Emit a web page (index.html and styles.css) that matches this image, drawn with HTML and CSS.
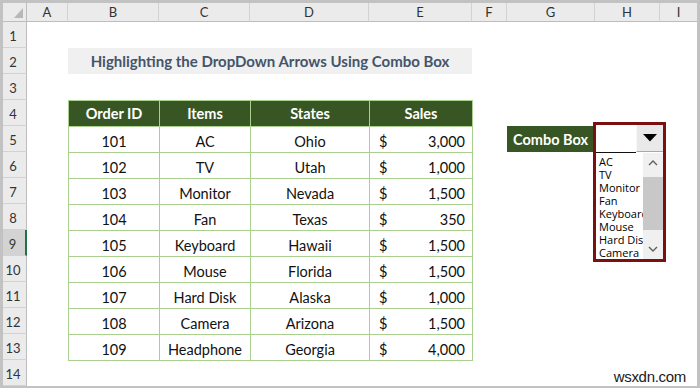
FILE: index.html
```html
<!DOCTYPE html>
<html>
<head>
<meta charset="utf-8">
<link rel="stylesheet" href="styles.css">
</head>
<body>
<div class="sheet">
  <div class="rowhead">
    <div class="rh">1</div>
    <div class="rh">2</div>
    <div class="rh">3</div>
    <div class="rh">4</div>
    <div class="rh">5</div>
    <div class="rh">6</div>
    <div class="rh">7</div>
    <div class="rh">8</div>
    <div class="rh active">9</div>
    <div class="rh">10</div>
    <div class="rh">11</div>
    <div class="rh">12</div>
    <div class="rh">13</div>
    <div class="rh">14</div>
  </div>

  <div class="title">Highlighting the DropDown Arrows Using Combo Box</div>

  <table class="data">
    <colgroup>
      <col class="c-id"><col class="c-item"><col class="c-state"><col class="c-sales">
    </colgroup>
    <thead>
      <tr><th>Order ID</th><th>Items</th><th>States</th><th>Sales</th></tr>
    </thead>
    <tbody>
      <tr><td>101</td><td>AC</td><td>Ohio</td><td class="money"><span>$</span><span>3,000</span></td></tr>
      <tr><td>102</td><td>TV</td><td>Utah</td><td class="money"><span>$</span><span>1,000</span></td></tr>
      <tr><td>103</td><td>Monitor</td><td>Nevada</td><td class="money"><span>$</span><span>1,500</span></td></tr>
      <tr><td>104</td><td>Fan</td><td>Texas</td><td class="money"><span>$</span><span>350</span></td></tr>
      <tr><td>105</td><td>Keyboard</td><td>Hawaii</td><td class="money"><span>$</span><span>1,500</span></td></tr>
      <tr><td>106</td><td>Mouse</td><td>Florida</td><td class="money"><span>$</span><span>1,500</span></td></tr>
      <tr><td>107</td><td>Hard Disk</td><td>Alaska</td><td class="money"><span>$</span><span>1,000</span></td></tr>
      <tr><td>108</td><td>Camera</td><td>Arizona</td><td class="money"><span>$</span><span>1,500</span></td></tr>
      <tr><td>109</td><td>Headphone</td><td>Georgia</td><td class="money"><span>$</span><span>4,000</span></td></tr>
    </tbody>
  </table>

  <div class="combo-label">Combo Box</div>

  <div class="corner"><svg width="9" height="10" viewBox="0 0 9 10"><polygon points="9,0 9,10 0,10" fill="#b8b8b8"/></svg></div>
  <div class="ch">A</div>
  <div class="ch">B</div>
  <div class="ch">C</div>
  <div class="ch">D</div>
  <div class="ch">E</div>
  <div class="ch">F</div>
  <div class="ch">G</div>
  <div class="ch">H</div>
  <div class="ch last">I</div>

  <div class="combo">
    <div class="combo-top">
      <div class="combo-field"></div>
      <div class="combo-btn"><svg width="14" height="8" viewBox="0 0 14 8"><polygon points="0,0 14,0 7,7.5" fill="#000"/></svg></div>
    </div>
    <div class="combo-list">
      <ul class="combo-items">
        <li>AC</li>
        <li>TV</li>
        <li>Monitor</li>
        <li>Fan</li>
        <li>Keyboard</li>
        <li>Mouse</li>
        <li>Hard Disk</li>
        <li>Camera</li>
      </ul>
      <div class="scroll">
        <div class="sbtn"><svg width="10" height="6" viewBox="0 0 10 6"><polyline points="1,5 5,1 9,5" fill="none" stroke="#606060" stroke-width="1.4"/></svg></div>
        <div class="track"><div class="thumb"></div></div>
        <div class="sbtn"><svg width="10" height="6" viewBox="0 0 10 6"><polyline points="1,1 5,5 9,1" fill="none" stroke="#606060" stroke-width="1.4"/></svg></div>
      </div>
    </div>
  </div>

  <div class="watermark">wsxdn.com</div>
</div>
</body>
</html>
```

FILE: styles.css
```css
* { box-sizing: border-box; }
html, body { margin: 0; padding: 0; }
body {
  width: 700px;
  height: 388px;
  overflow: hidden;
  background: #fff;
  font-family: "Lato", "Carlito", sans-serif;
}
.sheet {
  position: relative;
  width: 700px;
  height: 388px;
  border-style: solid;
  border-color: #c2c2c2;
  border-width: 3px 3px 2px 3px;
  display: grid;
  grid-template-columns: 24px 41px 91px 91px 119px 103px 35px 88px 65px 37px;
  grid-template-rows: 19px repeat(14, 26px);
  background: #fff;
}
.corner {
  background: #ebebeb;
  border-right: 1px solid #bdbdbd;
  border-bottom: 1px solid #bdbdbd;
  display: flex;
  justify-content: flex-end;
  align-items: flex-end;
  padding: 0 3px 3px 0;
}
.ch {
  background: #ebebeb;
  border-right: 1px solid #d2d2d2;
  border-bottom: 1px solid #bdbdbd;
  display: flex;
  align-items: center;
  justify-content: center;
  font-size: 13px;
  color: #333;
}
.ch.last { border-right: none; }
.rowhead {
  grid-column: 1;
  grid-row: 2 / -1;
  display: flex;
  flex-direction: column;
}
.rh {
  height: 26px;
  flex: none;
  background: #ebebeb;
  border-bottom: 1px solid #d2d2d2;
  border-right: 1px solid #bdbdbd;
  display: flex;
  align-items: flex-end;
  justify-content: center;
  padding: 0 3px 4px 0;
  font-size: 13px;
  line-height: 14px;
  color: #333;
}
.rh.active {
  background: #d3d3d3;
  border-right: 2px solid #217346;
}
.title {
  grid-column: 3 / 7;
  grid-row: 3;
  background: #f0f0f0;
  display: flex;
  align-items: center;
  justify-content: center;
  font-weight: 700;
  font-size: 15px;
  color: #44546a;
}
.data {
  grid-column: 3 / 7;
  grid-row: 5 / 15;
  border-collapse: collapse;
  table-layout: fixed;
  width: 405px;
  height: 261px;
  font-size: 14.5px;
  color: #111;
}
.c-id { width: 91px; }
.c-item { width: 91px; }
.c-state { width: 119px; }
.c-sales { width: 103px; }
.data th, .data td {
  border: 1px solid #a9d08e;
  padding: 0;
  height: 26px;
}
.data th {
  background: #375623;
  color: #fff;
  font-weight: 700;
  vertical-align: middle;
  text-align: center;
}
.data td {
  text-align: center;
  vertical-align: bottom;
  line-height: 16px;
  padding-bottom: 2px;
}
.data td.money {
  padding-left: 9px;
  padding-right: 7px;
}
.money span:first-child { float: left; }
.money span:last-child { float: right; }
.combo-label {
  grid-column: 8;
  grid-row: 6;
  background: #375623;
  color: #fff;
  font-weight: 700;
  font-size: 14.5px;
  display: flex;
  align-items: center;
  padding-left: 6px;
}
.combo {
  position: absolute;
  left: 590px;
  top: 119px;
  width: 73px;
  height: 140px;
  border: 3px solid #7a1010;
  background: #fff;
  display: flex;
  flex-direction: column;
  font-family: "Open Sans", "Noto Sans", sans-serif;
}
.combo-top {
  display: flex;
  height: 28px;
  flex: none;
}
.combo-field {
  flex: 1;
  background: #fff;
  border-bottom: 1px solid #111;
}
.combo-btn {
  width: 27px;
  height: 27px;
  background: #e9e9e9;
  border-left: 1px solid #f7f7f7;
  border-bottom: 1px solid #a8a8a8;
  display: flex;
  align-items: center;
  justify-content: center;
}
.combo-list {
  flex: 1;
  display: flex;
  min-height: 0;
}
.combo-items {
  list-style: none;
  margin: 0;
  padding: 2px 0 0 3px;
  flex: 1;
  overflow: hidden;
  white-space: nowrap;
  font-size: 11px;
  line-height: 13px;
  color: #000;
}
.scroll {
  width: 20px;
  flex: none;
  background: #f0f0f0;
  display: flex;
  flex-direction: column;
}
.sbtn {
  height: 20px;
  flex: none;
  display: flex;
  align-items: center;
  justify-content: center;
}
.track {
  flex: 1;
  padding-top: 4px;
}
.thumb {
  height: 53px;
  background: #c8c8c8;
}
.watermark {
  position: absolute;
  right: 11px;
  bottom: 2px;
  font-family: "Liberation Sans", Arial, sans-serif;
  font-size: 15px;
  line-height: 15px;
  color: #1a1a1a;
  letter-spacing: -0.3px;
}
```
